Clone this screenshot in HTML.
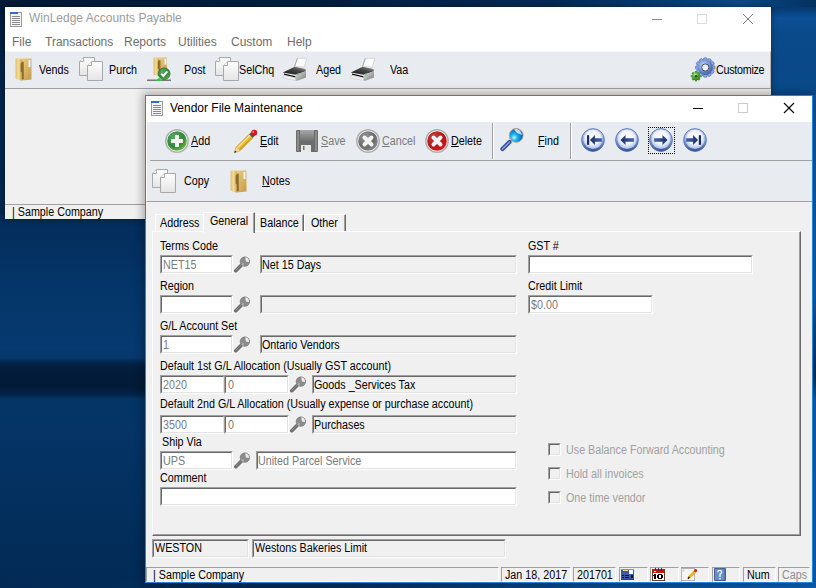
<!DOCTYPE html>
<html><head><meta charset="utf-8">
<style>
*{box-sizing:border-box;margin:0;padding:0}
html,body{width:816px;height:588px;overflow:hidden}
body{position:relative;font-family:"Liberation Sans",sans-serif;font-size:11px;color:#000;
background:#04305e;}
.a{position:absolute}
.t{position:absolute;white-space:nowrap;font-size:12px;line-height:14px;letter-spacing:0;transform:scaleX(.895);transform-origin:0 0}
.u{text-decoration:underline}
.g{color:#7a7a7a}
.tt{font-size:12px;line-height:14px;letter-spacing:0;transform:none}
svg{position:absolute;overflow:visible}
/* sunken 2px field */
.f{position:absolute;background:#fff;border-style:solid;border-width:2px;border-color:#a0a0a0 #fff #fff #a0a0a0}
.f::before{content:"";position:absolute;left:-1px;top:-1px;right:-1px;bottom:-1px;border-style:solid;border-width:1px;border-color:#696969 #e3e3e3 #e3e3e3 #696969}
.f.d{background:#f0f0f0}
/* status panel */
.p{position:absolute;border-style:solid;border-width:1px;border-color:#a0a0a0 #fff #fff #a0a0a0}
.cb{position:absolute;width:13px;height:13px;background:#f0f0f0;border-style:solid;border-width:1px;border-color:#a0a0a0 #fff #fff #a0a0a0}
.cb::before{content:"";position:absolute;left:0;top:0;right:0;bottom:0;border-style:solid;border-width:1px;border-color:#696969 #e3e3e3 #e3e3e3 #696969}
</style></head><body>
<!-- desktop detail -->
<div class="a" style="left:0;top:0;width:816px;height:20px;background:linear-gradient(90deg,#011a36 0%,#021f42 40%,#032a56 68%,#08427e 86%,#0a4888 91%,#04315f 100%)"></div>
<div class="a" style="left:771px;top:7px;width:45px;height:93px;background:linear-gradient(180deg,#06386e 0%,#0c5096 12%,#0a4a8a 28%,#0a4888 70%,#0a4c8e 100%)"></div>
<div class="a" style="left:0;top:0;width:6px;height:220px;background:linear-gradient(180deg,#011a36,#01234a 30%,#022850 100%)"></div>
<div class="a" style="left:0;top:215px;width:150px;height:373px;background:linear-gradient(180deg,#032c5a 0%,#05366a 22%,#063a70 36%,#05366a 40%,#053466 50%,#053466 56%,#03305f 75%,#032a55 100%)"></div>
<div class="a" style="left:0;top:358px;width:150px;height:41px;background:linear-gradient(180deg,rgba(1,16,36,0) 0%,rgba(1,16,36,.55) 14%,rgba(1,16,36,.7) 40%,rgba(1,16,36,.7) 70%,rgba(1,16,36,.5) 88%,rgba(1,16,36,0) 100%)"></div>
<div class="a" style="left:808px;top:95px;width:8px;height:493px;background:linear-gradient(180deg,#0b5aa8 0%,#0d66c0 40%,#04305e 57%,#0d66c0 62%,#0d68c4 100%)"></div>
<div class="a" style="left:0;top:578px;width:816px;height:10px;background:linear-gradient(90deg,#032a55 0%,#042e5c 40%,#0a4f98 75%,#0d62b8 100%)"></div>
<!-- ============ MAIN WINDOW ============ -->
<div class="a" style="left:5px;top:7px;width:766px;height:212px;background:#f0f0f0;box-shadow:0 0 6px rgba(0,0,0,.4)"></div>
<div class="a" style="left:5px;top:7px;width:766px;height:45px;background:#fff"></div>
<!-- title icon -->
<svg style="left:10px;top:11px" width="12" height="16" viewBox="0 0 12 16">
  <rect x="0.5" y="1.5" width="11" height="14" fill="#f4f4f4" stroke="#9a9a9a"/>
  <rect x="0" y="1" width="8" height="2" fill="#2f6fd0"/>
  <g stroke="#8a8a8a" stroke-width="1"><path d="M2 5.5h8M2 7.5h8M2 9.5h8M2 11.5h8M2 13.5h8"/></g>
</svg>
<div class="t tt" style="left:29px;top:11px;color:#9c9c9c">WinLedge Accounts Payable</div>
<!-- title buttons main -->
<div class="a" style="left:652px;top:19px;width:10px;height:1px;background:#8a8a8a"></div>
<div class="a" style="left:697px;top:14px;width:10px;height:10px;border:1px solid #dadada"></div>
<svg style="left:743px;top:14px" width="10" height="10" viewBox="0 0 10 10"><path d="M0 0L10 10M10 0L0 10" stroke="#7c7c7c" stroke-width="1"/></svg>
<!-- menu -->
<div class="t tt" style="left:12px;top:35px;color:#6d6d6d">File</div>
<div class="t tt" style="left:45px;top:35px;color:#6d6d6d">Transactions</div>
<div class="t tt" style="left:124px;top:35px;color:#6d6d6d">Reports</div>
<div class="t tt" style="left:178px;top:35px;color:#6d6d6d">Utilities</div>
<div class="t tt" style="left:231px;top:35px;color:#6d6d6d">Custom</div>
<div class="t tt" style="left:287px;top:35px;color:#6d6d6d">Help</div>
<!-- toolbar -->
<div class="a" style="left:5px;top:51px;width:766px;height:38px;background:#e8ebf0;border-bottom:1px solid #a0a0a0;border-top:1px solid #f4f6f8;border-right:1px solid #b8b8b8"></div>
<div id="mtb"></div>
<div class="t" style="left:39px;top:63px">Vends</div>
<div class="t" style="left:109px;top:63px">Purch</div>
<div class="t" style="left:184px;top:63px">Post</div>
<div class="t" style="left:239px;top:63px">SelChq</div>
<div class="t" style="left:316px;top:63px">Aged</div>
<div class="t" style="left:390px;top:63px">Vaa</div>
<div class="t" style="left:716px;top:63px;letter-spacing:-0.3px">Customize</div>
<!-- status -->
<div class="a" style="left:5px;top:204px;width:766px;height:1px;background:#a0a0a0"></div>
<div class="t" style="left:12px;top:205px">| Sample Company</div>

<!-- ============ VENDOR WINDOW ============ -->
<div class="a" style="left:145px;top:95px;width:668px;height:488px;background:#f0f0f0;border:1px solid #1c87dd;box-shadow:0 0 9px 2px rgba(0,0,0,.32)"></div>
<div class="a" style="left:146px;top:96px;width:666px;height:26px;background:#fff"></div>
<svg style="left:151px;top:100px" width="12" height="16" viewBox="0 0 12 16">
  <rect x="0.5" y="1.5" width="11" height="14" fill="#f4f4f4" stroke="#9a9a9a"/>
  <rect x="0" y="1" width="8" height="2" fill="#2f6fd0"/>
  <g stroke="#8a8a8a" stroke-width="1"><path d="M2 5.5h8M2 7.5h8M2 9.5h8M2 11.5h8M2 13.5h8"/></g>
</svg>
<div class="t tt" style="left:170px;top:101px">Vendor File Maintenance</div>
<div class="a" style="left:693px;top:108px;width:10px;height:1px;background:#000"></div>
<div class="a" style="left:738px;top:103px;width:10px;height:10px;border:1px solid #cccccc"></div>
<svg style="left:784px;top:103px" width="10" height="10" viewBox="0 0 10 10"><path d="M0 0L10 10M10 0L0 10" stroke="#000" stroke-width="1.1"/></svg>

<!-- toolbars -->
<div class="a" style="left:146px;top:122px;width:666px;height:80px;background:#e8ebf0;border-bottom:1px solid #a0a0a0;border-left:1px solid #fff"></div>
<div class="a" style="left:150px;top:160px;width:662px;height:1px;background:#a0a0a0"></div>
<div class="a" style="left:492px;top:123px;width:1px;height:36px;background:#a0a0a0;box-shadow:1px 0 0 #fff"></div>
<div class="a" style="left:570px;top:123px;width:1px;height:36px;background:#a0a0a0;box-shadow:1px 0 0 #fff"></div>
<div id="vtb"></div>
<div class="t" style="left:191px;top:134px"><span class="u">A</span>dd</div>
<div class="t" style="left:260px;top:134px"><span class="u">E</span>dit</div>
<div class="t g" style="left:321px;top:134px"><span class="u">S</span>ave</div>
<div class="t g" style="left:382px;top:134px"><span class="u">C</span>ancel</div>
<div class="t" style="left:451px;top:134px"><span class="u">D</span>elete</div>
<div class="t" style="left:538px;top:134px"><span class="u">F</span>ind</div>
<div class="a" style="left:648px;top:127px;width:27px;height:27px;border:1px dotted #000"></div>
<div class="t" style="left:184px;top:174px">Copy</div>
<div class="t" style="left:262px;top:174px"><span class="u">N</span>otes</div>

<!-- tabs -->
<!-- tab panel -->
<div class="a" style="left:152px;top:231px;width:649px;height:305px;border-style:solid;border-width:1px;border-color:#fff #696969 #696969 #fff"></div>
<div class="a" style="left:153px;top:232px;width:647px;height:303px;border-style:solid;border-width:0 1px 1px 0;border-color:#a0a0a0"></div>
<!-- Address -->
<div class="a" style="left:155px;top:214px;width:48px;height:17px;border-style:solid;border-width:1px 0 0 1px;border-color:#fff"></div>
<div class="t" style="left:160px;top:216px">Address</div>
<!-- Balance -->
<div class="a" style="left:254px;top:214px;width:50px;height:17px;border-style:solid;border-width:1px 1px 0 1px;border-color:#fff #696969 #fff #fff;box-shadow:inset -1px 0 0 #a0a0a0"></div>
<div class="t" style="left:260px;top:216px">Balance</div>
<!-- Other -->
<div class="a" style="left:304px;top:214px;width:42px;height:17px;border-style:solid;border-width:1px 1px 0 1px;border-color:#fff #696969 #fff #fff;box-shadow:inset -1px 0 0 #a0a0a0"></div>
<div class="t" style="left:311px;top:216px">Other</div>
<!-- General (selected) -->
<div class="a" style="left:203px;top:212px;width:52px;height:21px;background:#f0f0f0;border-style:solid;border-width:1px 1px 0 1px;border-color:#fff #696969 #fff #fff;box-shadow:inset -1px 0 0 #a0a0a0"></div>
<div class="t" style="left:210px;top:214px">General</div>

<!-- labels -->
<div class="t" style="left:160px;top:239px">Terms Code</div>
<div class="t" style="left:160px;top:279px">Region</div>
<div class="t" style="left:160px;top:319px">G/L Account Set</div>
<div class="t" style="left:160px;top:359px">Default 1st G/L Allocation (Usually GST account)</div>
<div class="t" style="left:160px;top:397px">Default 2nd G/L Allocation (Usually expense or purchase account)</div>
<div class="t" style="left:162px;top:435px">Ship Via</div>
<div class="t" style="left:160px;top:471px">Comment</div>
<div class="t" style="left:528px;top:239px">GST #</div>
<div class="t" style="left:528px;top:279px">Credit Limit</div>
<!-- fields -->
<div class="f" style="left:160px;top:255px;width:73px;height:19px"></div>
<div class="t g" style="left:163px;top:258px">NET15</div>
<div class="f d" style="left:260px;top:255px;width:257px;height:19px"></div>
<div class="t" style="left:262px;top:258px">Net 15 Days</div>

<div class="f" style="left:160px;top:295px;width:73px;height:19px"></div>
<div class="f d" style="left:260px;top:295px;width:257px;height:19px"></div>

<div class="f" style="left:160px;top:335px;width:73px;height:19px"></div>
<div class="t g" style="left:163px;top:338px">1</div>
<div class="f d" style="left:260px;top:335px;width:257px;height:19px"></div>
<div class="t" style="left:262px;top:338px">Ontario Vendors</div>

<div class="f" style="left:160px;top:375px;width:65px;height:19px"></div>
<div class="t g" style="left:163px;top:378px">2020</div>
<div class="f" style="left:224px;top:375px;width:65px;height:19px"></div>
<div class="t g" style="left:228px;top:378px">0</div>
<div class="f d" style="left:312px;top:375px;width:205px;height:19px"></div>
<div class="t" style="left:314px;top:378px">Goods _Services Tax</div>

<div class="f" style="left:160px;top:415px;width:65px;height:19px"></div>
<div class="t g" style="left:163px;top:418px">3500</div>
<div class="f" style="left:224px;top:415px;width:65px;height:19px"></div>
<div class="t g" style="left:228px;top:418px">0</div>
<div class="f d" style="left:312px;top:415px;width:205px;height:19px"></div>
<div class="t" style="left:314px;top:418px">Purchases</div>

<div class="f" style="left:160px;top:451px;width:73px;height:19px"></div>
<div class="t g" style="left:163px;top:454px">UPS</div>
<div class="f" style="left:256px;top:451px;width:261px;height:19px"></div>
<div class="t g" style="left:258px;top:454px">United Parcel Service</div>

<div class="f" style="left:160px;top:487px;width:357px;height:19px"></div>

<div class="f" style="left:528px;top:255px;width:225px;height:19px"></div>
<div class="f" style="left:528px;top:295px;width:125px;height:19px"></div>
<div class="t g" style="left:531px;top:298px">$0.00</div>

<!-- checkboxes -->
<div class="cb" style="left:548px;top:443px"></div>
<div class="t" style="left:566px;top:443px;color:#a0a0a0">Use Balance Forward Accounting</div>
<div class="cb" style="left:548px;top:467px"></div>
<div class="t" style="left:566px;top:467px;color:#a0a0a0">Hold all invoices</div>
<div class="cb" style="left:548px;top:491px"></div>
<div class="t" style="left:566px;top:491px;color:#a0a0a0">One time vendor</div>


<!-- bottom -->
<div class="f d" style="left:152px;top:539px;width:97px;height:19px"></div>
<div class="t" style="left:155px;top:541px">WESTON</div>
<div class="f d" style="left:252px;top:539px;width:254px;height:19px"></div>
<div class="t" style="left:255px;top:541px">Westons Bakeries Limit</div>
<!-- status bar -->
<div class="p" style="left:146px;top:567px;width:353px;height:15px"></div>
<div class="t" style="left:153px;top:568px">| Sample Company</div>
<div class="p" style="left:501px;top:567px;width:70px;height:15px"></div>
<div class="t" style="left:505px;top:568px">Jan 18, 2017</div>
<div class="p" style="left:573px;top:567px;width:43px;height:15px"></div>
<div class="t" style="left:577px;top:568px">201701</div>
<div class="p" style="left:619px;top:567px;width:29px;height:15px"></div>
<div class="p" style="left:650px;top:567px;width:29px;height:15px"></div>
<div class="p" style="left:681px;top:567px;width:28px;height:15px"></div>
<div class="p" style="left:712px;top:567px;width:28px;height:15px"></div>
<div class="p" style="left:743px;top:567px;width:33px;height:15px"></div>
<div class="t" style="left:747px;top:568px">Num</div>
<div class="p" style="left:778px;top:567px;width:32px;height:15px"></div>
<div class="t" style="left:782px;top:568px;color:#8d8d8d">Caps</div>

<svg width="0" height="0" style="position:absolute">
<defs>
  <linearGradient id="fold" x1="0" y1="0" x2="1" y2="1"><stop offset="0" stop-color="#f0d890"/><stop offset="1" stop-color="#c89a48"/></linearGradient>
  <linearGradient id="foldf" x1="0" y1="0" x2="1" y2="0"><stop offset="0" stop-color="#e2c071"/><stop offset=".5" stop-color="#f2dc96"/><stop offset="1" stop-color="#d0a758"/></linearGradient>
  <linearGradient id="page" x1="0" y1="0" x2="0" y2="1"><stop offset="0" stop-color="#ffffff"/><stop offset="1" stop-color="#e4e4e4"/></linearGradient>
  <radialGradient id="grn" cx=".35" cy=".3" r=".8"><stop offset="0" stop-color="#5aa866"/><stop offset=".6" stop-color="#2f8a3a"/><stop offset="1" stop-color="#78c040"/></radialGradient>
  <radialGradient id="red" cx=".35" cy=".3" r=".8"><stop offset="0" stop-color="#c84040"/><stop offset=".6" stop-color="#b01818"/><stop offset="1" stop-color="#ee1010"/></radialGradient>
  <radialGradient id="gry" cx=".35" cy=".3" r=".8"><stop offset="0" stop-color="#9a9a9a"/><stop offset=".6" stop-color="#6a6a6a"/><stop offset="1" stop-color="#909090"/></radialGradient>
  <radialGradient id="nav" cx=".5" cy=".45" r=".55"><stop offset="0" stop-color="#ffffff"/><stop offset=".55" stop-color="#e4ebf8"/><stop offset=".85" stop-color="#8ea6d8"/><stop offset="1" stop-color="#3e5c9c"/></radialGradient>
  <linearGradient id="arr" x1="0" y1="0" x2="1" y2="0"><stop offset="0" stop-color="#1a2c66"/><stop offset="1" stop-color="#4a68b0"/></linearGradient>
  <linearGradient id="arr2" x1="0" y1="0" x2="1" y2="0"><stop offset="0" stop-color="#4a68b0"/><stop offset="1" stop-color="#1a2c66"/></linearGradient>
  <radialGradient id="lens" cx=".35" cy=".65" r=".7"><stop offset="0" stop-color="#bff4ff"/><stop offset=".35" stop-color="#1ab2ee"/><stop offset="1" stop-color="#0048b8"/></radialGradient>
  <linearGradient id="flop" x1="0" y1="0" x2="0" y2="1"><stop offset="0" stop-color="#a8a8a8"/><stop offset="1" stop-color="#6a6a6a"/></linearGradient>
  <radialGradient id="gear" cx=".4" cy=".35" r=".7"><stop offset="0" stop-color="#d8e4f8"/><stop offset=".5" stop-color="#7b9ad8"/><stop offset="1" stop-color="#3556a0"/></radialGradient>
  <radialGradient id="gearg" cx=".4" cy=".35" r=".7"><stop offset="0" stop-color="#c8f0a0"/><stop offset=".5" stop-color="#5aa840"/><stop offset="1" stop-color="#2a7a20"/></radialGradient>
  <symbol id="folder" viewBox="0 0 17 23">
    <path d="M1 0.5H16.5V21.5L7 22.5Z" fill="url(#fold)"/>
    <rect x="13.5" y="2" width="2.5" height="7" fill="#f6f6f6"/>
    <rect x="15.2" y="2" width="0.8" height="7" fill="#c8c8c8"/>
    <path d="M5 3L8.8 4V21L5 22Z" fill="#8e6c2c"/>
    <path d="M0.5 0.5L6.8 1.5V4.5L5.6 5.5V13.5L6.8 14.5V23L0.5 20.5Z" fill="url(#foldf)"/>
  </symbol>
  <symbol id="copy" viewBox="0 0 24 24">
    <path d="M4.5 0.5H15.5V18.5H0.5V4.5Z" fill="url(#page)" stroke="#a8a8a8"/>
    <path d="M0.5 4.5H4.5V0.5" fill="#fff" stroke="#a8a8a8"/>
    <path d="M12.5 4.5H23.5V23.5H8.5V8.5Z" fill="url(#page)" stroke="#a8a8a8"/>
    <path d="M8.5 8.5H12.5V4.5" fill="#fff" stroke="#a8a8a8"/>
  </symbol>
  <linearGradient id="prt" x1="0" y1="1" x2="1" y2="0"><stop offset="0" stop-color="#141414"/><stop offset=".6" stop-color="#4a4a4a"/><stop offset="1" stop-color="#a8a8a8"/></linearGradient>
  <linearGradient id="prs" x1="0" y1="0" x2="1" y2="1"><stop offset="0" stop-color="#e0e0e0"/><stop offset="1" stop-color="#7a7a7a"/></linearGradient>
  <symbol id="printer" viewBox="0 0 26 24">
    <path d="M15.3 1.3H24.8L22.2 10.2L12.6 9.4Z" fill="#fbfbfb" stroke="#c4c4c4" stroke-width=".6"/>
    <path d="M15.3 1.3L12.6 9.4" stroke="#9a9a9a" stroke-width=".8"/>
    <path d="M0.8 15.6L12.6 9.8L23.4 12L24 14.2L13.8 17.8Z" fill="url(#prt)"/>
    <path d="M2 16.6L13.6 19.2V20.4L2 17.8Z" fill="#050505"/>
    <path d="M1 18.4L13.4 21V23.4L1 20.8Z" fill="#f6f6f6" stroke="#bdbdbd" stroke-width=".5"/>
    <path d="M13.6 17.8L24 14.2V20.6L14.6 24L13.6 23.2Z" fill="url(#prs)"/>
    <circle cx="16" cy="17.2" r="1" fill="#56d04a"/>
  </symbol>
  <symbol id="gmag" viewBox="0 0 16 16">
    <path d="M1.8 14.2L7 9" stroke="#707070" stroke-width="3.6" stroke-linecap="round"/>
    <path d="M2.2 13.4L6.6 9" stroke="#a8a8a8" stroke-width="1" stroke-dasharray="1 .8"/>
    <circle cx="10.9" cy="5.1" r="4.7" fill="#8c8c8c" stroke="#7a7a7a" stroke-width=".8"/>
    <path d="M11.2 0.8A4.3 4.3 0 0 1 15 5.4L12 5Z" fill="#ececec"/>
    <path d="M7 7.5A4.3 4.3 0 0 0 9.5 9.4L9.6 6.5Z" fill="#b8b8b8"/>
  </symbol>
  <linearGradient id="navo" x1="0" y1="0" x2="0" y2="1"><stop offset="0" stop-color="#c4d0ee"/><stop offset=".5" stop-color="#8ea4d8"/><stop offset="1" stop-color="#2e4c94"/></linearGradient>
  <radialGradient id="navi" cx=".5" cy=".4" r=".6"><stop offset="0" stop-color="#ffffff"/><stop offset=".6" stop-color="#eef2fa"/><stop offset="1" stop-color="#a9bbe6"/></radialGradient>
  <symbol id="navb" viewBox="0 0 24 24">
    <circle cx="12" cy="12" r="11.4" fill="url(#navo)" stroke="#4a68ac" stroke-width=".8"/>
    <circle cx="12" cy="11.4" r="9.6" fill="url(#navi)"/>
  </symbol>
</defs>
</svg>

<!-- main toolbar icons -->
<svg style="left:15px;top:58px" width="17" height="23"><use href="#folder"/></svg>
<svg style="left:79px;top:57px" width="24" height="24"><use href="#copy"/></svg>
<svg style="left:147px;top:56px" width="24" height="26" viewBox="0 0 24 26">
  <g transform="translate(6,1) scale(0.85)"><use href="#folder" width="17" height="23"/></g>
  <rect x="0" y="23.5" width="24" height="1.5" fill="#777"/>
  <path d="M9 25L12 21.5L15 25Z" fill="#26d030"/>
  <circle cx="17.2" cy="17.7" r="5.8" fill="url(#grn)" stroke="#1f6a2a" stroke-width=".8"/>
  <path d="M14.2 17.6L16.4 19.9L20.3 15.4" stroke="#fff" stroke-width="2" fill="none"/>
</svg>
<svg style="left:215px;top:57px" width="24" height="24"><use href="#copy"/></svg>
<svg style="left:282px;top:57px" width="26" height="24"><use href="#printer"/></svg>
<svg style="left:350px;top:57px" width="26" height="24"><use href="#printer"/></svg>
<!-- gears -->
<svg style="left:690px;top:56px" width="26" height="28" viewBox="0 0 26 28">
  <g transform="translate(15.3,11.5)">
    <g fill="#8ea8e4" stroke="#4462a8" stroke-width=".6">
      <rect x="-1.7" y="-9.7" width="3.4" height="19.4" rx=".8"/>
      <rect x="-1.7" y="-9.7" width="3.4" height="19.4" rx=".8" transform="rotate(30)"/>
      <rect x="-1.7" y="-9.7" width="3.4" height="19.4" rx=".8" transform="rotate(60)"/>
      <rect x="-1.7" y="-9.7" width="3.4" height="19.4" rx=".8" transform="rotate(90)"/>
      <rect x="-1.7" y="-9.7" width="3.4" height="19.4" rx=".8" transform="rotate(120)"/>
      <rect x="-1.7" y="-9.7" width="3.4" height="19.4" rx=".8" transform="rotate(150)"/>
    </g>
    <circle r="7.4" fill="url(#gear)"/>
    <circle r="3.6" fill="#eef0f4" stroke="#3a4258" stroke-width=".9"/>
  </g>
  <g transform="translate(6,20.2)">
    <g fill="#4a9a38">
      <rect x="-1.1" y="-5.2" width="2.2" height="10.4"/>
      <rect x="-1.1" y="-5.2" width="2.2" height="10.4" transform="rotate(45)"/>
      <rect x="-1.1" y="-5.2" width="2.2" height="10.4" transform="rotate(90)"/>
      <rect x="-1.1" y="-5.2" width="2.2" height="10.4" transform="rotate(135)"/>
    </g>
    <circle r="4" fill="url(#gearg)"/>
    <circle r="1.3" fill="#2a4a20"/>
  </g>
</svg>

<!-- vendor toolbar icons -->
<svg style="left:165px;top:129px" width="24" height="24" viewBox="0 0 24 24">
  <circle cx="12" cy="12" r="11.2" fill="#fafafa" stroke="#b0b0b0" stroke-width="1.5"/>
  <circle cx="12" cy="12" r="9.8" fill="url(#grn)"/>
  <path d="M10 6H14V10H18V14H14V18H10V14H6V10H10Z" fill="#f2f2f2"/>
</svg>
<svg style="left:233px;top:129px" width="25" height="25" viewBox="0 0 25 25">
  <path d="M1.3 23.7L3.2 18.2L16.2 5.2L19.8 8.8L6.8 21.8Z" fill="#f0bc30" stroke="#a8700c" stroke-width=".6"/>
  <path d="M4.6 18.6L17.2 6" stroke="#fde68a" stroke-width="1.3"/>
  <path d="M6.5 20.8L19 8.3" stroke="#c88a14" stroke-width="1"/>
  <path d="M3.2 18.2L6.8 21.8L1.3 23.7Z" fill="#f4d8a8"/>
  <path d="M1.3 23.7L2.1 21.4L3.6 22.9Z" fill="#222"/>
  <path d="M16.2 5.2L18.4 3L22 6.6L19.8 8.8Z" fill="#48525a"/>
  <circle cx="21.2" cy="3.8" r="3" fill="#e01414"/>
  <circle cx="20.3" cy="2.9" r="1" fill="#ff8a8a"/>
</svg>
<svg style="left:296px;top:130px" width="22" height="22" viewBox="0 0 22 22">
  <rect x="0" y="0" width="22" height="22" rx="1" fill="#6c6c6c"/>
  <rect x="1" y="1" width="2" height="20" fill="#8a8a8a"/>
  <rect x="19" y="1" width="2" height="20" fill="#8a8a8a"/>
  <rect x="4" y="0" width="14" height="12" fill="url(#flop)"/>
  <rect x="5" y="15" width="10" height="7" fill="#e8e8e8"/>
  <rect x="7" y="16" width="1.5" height="4" fill="#707070"/>
</svg>
<svg style="left:356px;top:129px" width="24" height="24" viewBox="0 0 24 24">
  <circle cx="12" cy="12" r="11.2" fill="#fafafa" stroke="#b0b0b0" stroke-width="1.5"/>
  <circle cx="12" cy="12" r="9.8" fill="url(#gry)"/>
  <path d="M8.5 8.5L15.5 15.5M15.5 8.5L8.5 15.5" stroke="#f2f2f2" stroke-width="4" stroke-linecap="round"/>
</svg>
<svg style="left:425px;top:129px" width="24" height="24" viewBox="0 0 24 24">
  <circle cx="12" cy="12" r="11.2" fill="#fafafa" stroke="#b0b0b0" stroke-width="1.5"/>
  <circle cx="12" cy="12" r="9.8" fill="url(#red)"/>
  <path d="M8.5 8.5L15.5 15.5M15.5 8.5L8.5 15.5" stroke="#f2f2f2" stroke-width="4" stroke-linecap="round"/>
</svg>
<svg style="left:498px;top:127px" width="26" height="26" viewBox="0 0 26 26">
  <path d="M4.5 22L11.5 15" stroke="#34509a" stroke-width="4.2" stroke-linecap="round"/>
  <path d="M4.5 22L11.5 15" stroke="#8ca4e0" stroke-width="1.2" stroke-linecap="round"/>
  <circle cx="18.2" cy="8.4" r="6.9" fill="url(#lens)" stroke="#b8a088" stroke-width="1"/>
  <path d="M16 2.5A6 6 0 0 1 24 8L19 6Z" fill="#e4f0ff" opacity=".85"/>
</svg>
<!-- nav -->
<svg style="left:581px;top:128px" width="24" height="24" viewBox="0 0 24 24"><use href="#navb" width="24" height="24"/>
  <rect x="6" y="7.2" width="2.2" height="9.6" fill="#1a2c66"/>
  <path d="M9 12L14 7V10.3H21V13.7H14V17Z" fill="url(#arr)"/></svg>
<svg style="left:615px;top:128px" width="24" height="24" viewBox="0 0 24 24"><use href="#navb" width="24" height="24"/>
  <path d="M5.5 12L10.5 7V10.3H19V13.7H10.5V17Z" fill="url(#arr)"/></svg>
<svg style="left:649px;top:128px" width="24" height="24" viewBox="0 0 24 24"><use href="#navb" width="24" height="24"/>
  <path d="M18.5 12L13.5 7V10.3H5V13.7H13.5V17Z" fill="url(#arr2)"/></svg>
<svg style="left:683px;top:128px" width="24" height="24" viewBox="0 0 24 24"><use href="#navb" width="24" height="24"/>
  <rect x="15.8" y="7.2" width="2.2" height="9.6" fill="#1a2c66"/>
  <path d="M15 12L10 7V10.3H3V13.7H10V17Z" fill="url(#arr2)"/></svg>
<!-- copy / notes -->
<svg style="left:152px;top:169px" width="24" height="24"><use href="#copy"/></svg>
<svg style="left:230px;top:170px" width="17" height="23"><use href="#folder"/></svg>

<!-- form magnifiers -->
<svg style="left:234px;top:256px" width="16" height="17"><use href="#gmag"/></svg>
<svg style="left:234px;top:296px" width="16" height="17"><use href="#gmag"/></svg>
<svg style="left:234px;top:336px" width="16" height="17"><use href="#gmag"/></svg>
<svg style="left:290px;top:376px" width="16" height="17"><use href="#gmag"/></svg>
<svg style="left:290px;top:416px" width="16" height="17"><use href="#gmag"/></svg>
<svg style="left:234px;top:452px" width="16" height="17"><use href="#gmag"/></svg>

<!-- status icons -->
<svg style="left:621px;top:569px" width="13" height="11" viewBox="0 0 13 11" shape-rendering="crispEdges">
  <rect x="0" y="0" width="13" height="11" fill="#3c5aa6"/>
  <rect x="0" y="0" width="13" height="1" fill="#7890d0"/>
  <rect x="2" y="1" width="5" height="1" fill="#f0e070"/>
  <rect x="8" y="1" width="4" height="4" fill="#fff"/>
  <rect x="1" y="6" width="2" height="1" fill="#0c1430"/><rect x="4" y="6" width="4" height="1" fill="#0c1430"/>
  <rect x="1" y="8" width="2" height="1" fill="#0c1430"/><rect x="4" y="8" width="4" height="1" fill="#0c1430"/>
  <rect x="10" y="6" width="2" height="3" fill="#0c1430"/>
  <rect x="0" y="10" width="13" height="1" fill="#2a4080"/>
</svg>
<svg style="left:652px;top:568px" width="13" height="13" viewBox="0 0 13 13" shape-rendering="crispEdges">
  <rect x="0" y="1" width="13" height="12" fill="#6a4020"/>
  <rect x="1" y="2" width="11" height="10" fill="#fff"/>
  <rect x="1" y="2" width="11" height="3" fill="#d01010"/>
  <rect x="2" y="3" width="2" height="1" fill="#fff"/>
  <rect x="3" y="0" width="1" height="3" fill="#333"/><rect x="6" y="0" width="1" height="3" fill="#333"/><rect x="9" y="0" width="1" height="3" fill="#333"/>
  <rect x="2" y="6" width="2" height="5" fill="#000"/><rect x="1" y="7" width="1" height="1" fill="#000"/>
  <rect x="6" y="6" width="4" height="1" fill="#000"/><rect x="6" y="10" width="4" height="1" fill="#000"/>
  <rect x="5" y="7" width="2" height="3" fill="#000"/><rect x="9" y="7" width="2" height="3" fill="#000"/>
</svg>
<svg style="left:681px;top:568px" width="16" height="13" viewBox="0 0 16 13">
  <rect x="0.5" y="0.5" width="13" height="12" fill="#f6f6f6" stroke="#b4b4b4"/>
  <path d="M0.5 3.5L3.5 0.5V3.5Z" fill="#cfcfcf"/>
  <path d="M8 9.5L14 3.5" stroke="#e8b020" stroke-width="2.6"/>
  <path d="M7 10.8L8.3 9" stroke="#222" stroke-width="1.6"/>
  <circle cx="14.6" cy="2.6" r="1.6" fill="#e02020"/>
</svg>
<svg style="left:714px;top:568px" width="12" height="13" viewBox="0 0 12 13">
  <rect x="0" y="0" width="12" height="13" rx="1" fill="#3e6094"/>
  <rect x="1" y="1" width="9.5" height="11" fill="#6a8ec0"/>
  <path d="M3.8 4.2A1.9 1.9 0 1 1 6 6.2V9" stroke="#fff" stroke-width="1.3" fill="none"/>
  <rect x="5.3" y="10" width="1.4" height="1.4" fill="#fff"/>
</svg>
</body></html>
